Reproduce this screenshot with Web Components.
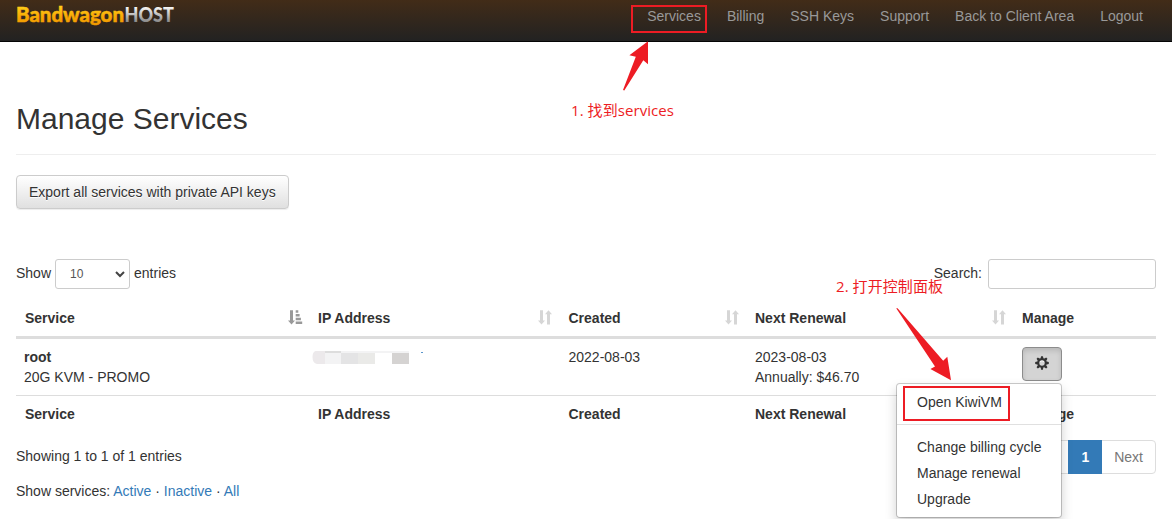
<!DOCTYPE html>
<html lang="en">
<head>
<meta charset="utf-8">
<title>Manage Services</title>
<style>
html,body{margin:0;height:519px;overflow:hidden;background:#fff}
body{font:14px/20px "Liberation Sans",Arial,sans-serif;color:#333}
</style>
</head>
<body>
<services-page></services-page>
<script>
const define = (name, html) => {
  const t = document.createElement('template');
  t.innerHTML = html;
  customElements.define(name, class extends HTMLElement {
    constructor() {
      super();
      this.attachShadow({mode: 'open'}).append(t.content.cloneNode(true));
    }
  });
};

define('brand-logo', `
<style>:host{display:block;width:160px;height:24px}svg{display:block;overflow:visible}text{font:900 20px Lato,sans-serif;stroke-width:.5}</style>
<svg width="160" height="24" viewBox="0 0 160 24">
<defs>
<linearGradient id="gold" gradientUnits="userSpaceOnUse" x1="0" y1="2" x2="0" y2="20"><stop offset="0" stop-color="#ffcf18"/><stop offset=".6" stop-color="#f8a905"/><stop offset="1" stop-color="#f09a00"/></linearGradient>
<linearGradient id="steel" gradientUnits="userSpaceOnUse" x1="0" y1="2" x2="0" y2="18"><stop offset="0" stop-color="#fff"/><stop offset="1" stop-color="#888"/></linearGradient>
</defs>
<text x="0" y="18" fill="url(#gold)" stroke="url(#gold)" textLength="108" lengthAdjust="spacingAndGlyphs">Bandwagon</text>
<text x="108.5" y="18" fill="url(#steel)" textLength="49.5" lengthAdjust="spacingAndGlyphs" style="font-size:20.5px">HOST</text>
</svg>`);

define('nav-link', `<style>:host{display:block;padding:6px 13px;color:#999;line-height:20px;white-space:nowrap}</style><slot></slot>`);

define('nav-bar', `
<style>:host{display:flex;box-sizing:border-box;height:42px;padding:0 16px;justify-content:space-between;border-bottom:1px solid #050505;background:linear-gradient(#422c18,#222)}
brand-logo{margin-top:4px}nav{display:flex}</style>
<brand-logo></brand-logo><nav><slot></slot></nav>`);

define('ui-button', `
<style>:host{display:inline-block}button{display:block;font:inherit;height:34px;padding:0 12px;border:1px solid #ccc;border-radius:4px;color:#333;background:linear-gradient(#fff,#e0e0e0);text-shadow:0 1px 0 #fff;box-shadow:inset 0 1px 0 rgba(255,255,255,.15),0 1px 1px rgba(0,0,0,.075)}
:host([pressed]) button{border-color:#8c8c8c;background:#d4d4d4;box-shadow:inset 0 3px 5px rgba(0,0,0,.125)}</style>
<button><slot></slot></button>`);

define('gear-icon', `
<style>:host{display:block;width:14px;height:16px}svg{display:block}</style>
<svg width="14" height="14" viewBox="0 0 14 14"><circle cx="7" cy="8" r="3.8" fill="none" stroke="#fff" stroke-width="2.2"/><g fill="#333"><g id="t"><path d="M6.1 .2h1.8l.8 3h-3.4zM6.1 13.8h1.8l.8-3h-3.4z"/></g><use href="#t" transform="rotate(45 7 7)"/><use href="#t" transform="rotate(90 7 7)"/><use href="#t" transform="rotate(135 7 7)"/></g><circle cx="7" cy="7" r="3.7" fill="none" stroke="#333" stroke-width="2.1"/></svg>`);

define('sort-icon', `
<style>:host{display:block;width:15px;height:15px}svg{display:none}:host(:not([sorted])) .both,:host([sorted]) .asc{display:block}</style>
<svg class="both" width="15" height="15" viewBox="0 0 15 15" fill="#d6d6d6"><path d="M2 .3h3v10.2h2L3.5 14.5 0 10.5h2zM9 14.5h3V4.3h2L10.5.3 7 4.3h2z"/></svg>
<svg class="asc" width="15" height="15" viewBox="0 0 15 15" fill="#999"><path d="M2 .3h3v10.2h2L3.5 14.5 0 10.5h2zM7.7 .3h2.6v2.4H7.7zM7.7 4h3.9v2.4H7.7zM7.7 7.8h5.2v2.4H7.7zM7.7 11.6h6.5v2.4H7.7z"/></svg>`);

define('length-select', `
<style>:host{display:inline-flex;box-sizing:border-box;width:75px;height:30px;border:1px solid #ccc;border-radius:3px;align-items:center;justify-content:space-between;padding:0 4px 0 14px;font-size:12px;color:#555;margin:0 4px}</style>
<span><slot></slot></span><svg width="10" height="7" viewBox="0 0 10 7"><path d="M1 1l4 4 4-4" fill="none" stroke="#444" stroke-width="2"/></svg>`);

define('masked-value', `
<style>:host{display:block;height:20px}svg{display:block}</style>
<svg width="120" height="20" viewBox="0 0 120 20">
<path d="M3.5 4H13v13H5Q.5 16 .5 10Q.5 5 3.5 4" fill="#ece9eb"/>
<path fill="#f3f3f4" d="M13 4h16v13H13zM29 4h68v2H29z"/><path fill="#ddd" d="M13 4h16v2H13z"/>
<path fill="#e4e4e5" d="M29 6h17v11H29z"/>
<path fill="#eaeae8" d="M46 6h17v11H46z"/>
<path fill="#d5d3d2" d="M80 6h17v11H80z"/><path fill="#5a96cc" d="M109 5h2v1h-2z"/></svg>`);

define('services-table', `
<style>:host{display:block;margin-top:11px}
table{width:1140px;table-layout:fixed;border-collapse:separate;border-spacing:0}
th,td{padding:8px;text-align:left;vertical-align:top;box-sizing:border-box}
thead th{border-bottom:3px solid #ddd}th:first-child{padding-left:9px}
tbody td{height:56px}tfoot th{border-top:1px solid #ddd;height:37px}
.h{display:flex;justify-content:space-between;align-items:center}
sort-icon{position:relative;top:-.5px;margin-right:-.5px}
masked-value{margin-left:-6px}ui-button{display:block;width:40px}</style>
<table><colgroup><col style="width:294px"><col style="width:250.5px"><col style="width:186.5px"><col style="width:267px"><col></colgroup>
<thead><tr>
<th><div class="h">Service<sort-icon sorted></sort-icon></div></th>
<th><div class="h">IP Address<sort-icon></sort-icon></div></th>
<th><div class="h">Created<sort-icon></sort-icon></div></th>
<th><div class="h">Next Renewal<sort-icon></sort-icon></div></th>
<th>Manage</th></tr></thead>
<tbody><tr><td><b>root</b><br>20G KVM - PROMO</td><td><masked-value></masked-value></td><td>2022-08-03</td><td>2023-08-03<br>Annually: $46.70</td><td><ui-button pressed><gear-icon></gear-icon></ui-button></td></tr></tbody>
<tfoot><tr><th>Service</th><th>IP Address</th><th>Created</th><th>Next Renewal</th><th>Manage</th></tr></tfoot></table>`);

define('page-links', `
<style>:host{display:flex}span{box-sizing:border-box;height:34px;padding:6px 12px;border:1px solid #ddd;margin-left:-1px;color:#777}
span:first-child{width:82px;border-radius:4px 0 0 4px}span:last-child{border-radius:0 4px 4px 0}.on{background:#337ab7;border-color:#337ab7;color:#fff;font-weight:700;position:relative}</style>
<span></span><span class="on">1</span><span>Next</span>`);

define('action-menu', `
<style>:host{display:block;position:absolute;left:896px;top:383px;box-sizing:border-box;width:166px;height:135px;padding:5px 0;border:1px solid rgba(0,0,0,.2);border-radius:4px;background:#fff;background-clip:padding-box;box-shadow:0 6px 12px rgba(0,0,0,.175)}
div{padding:3px 20px;white-space:nowrap}hr{border:0;height:1px;background:#e0e0e0;margin:9px 0}</style>
<div>Open KiwiVM</div><hr><div>Change billing cycle</div><div>Manage renewal</div><div>Upgrade</div>`);

define('tutorial-marks', `
<style>:host{display:block;position:absolute;left:0;top:0;pointer-events:none}svg{display:block}text{font:15px "Open Sans","Noto Sans CJK SC",sans-serif}</style>
<svg width="1172" height="519" viewBox="0 0 1172 519" fill="#ed1c24">
<g fill="none" stroke="#ed1c24" stroke-width="2"><path d="M632 6h74v26h-74zM904 387h105v33H904z"/></g>
<path d="M648 41.3V64.3L643.3 60.3 624.3 90.5 623 90 635.8 56.8 629.4 55.2z"/>
<path d="M896.2 308.3L897.6 308.3 943.2 360.7 947.3 356.8 951 380.2 930.4 369 935 366.6z"/>
<text x="571" y="116" textLength="103">1. 找到services</text>
<text x="836" y="292" textLength="107">2. 打开控制面板</text>
</svg>`);

define('services-page', `
<style>:host{display:block;position:relative;width:1172px;height:519px;overflow:hidden}
main{padding:0 16px}h1{font-size:30px;line-height:33px;font-weight:400;margin:0;padding:60px 0 19px;border-bottom:1px solid #eee}
.export{margin-top:20px}
.row{display:flex;justify-content:space-between;align-items:center}
.tools{margin-top:50px;height:30px}.tools>div{display:flex;align-items:center}.tools span{padding-bottom:2px}
input{box-sizing:border-box;width:168px;height:30px;border:1px solid #ccc;border-radius:3px;margin:0 0 0 6px;padding:5px 10px}
.foot{height:34px;margin-top:8px}.foot span{margin-top:-2px}p{margin:7px 0 0}a{color:#337ab7}</style>
<nav-bar><nav-link>Services</nav-link><nav-link>Billing</nav-link><nav-link>SSH Keys</nav-link><nav-link>Support</nav-link><nav-link>Back to Client Area</nav-link><nav-link>Logout</nav-link></nav-bar>
<main>
<h1>Manage Services</h1>
<div class="export row"><ui-button>Export all services with private API keys</ui-button></div>
<div class="tools row"><div><span>Show</span><length-select>10</length-select><span>entries</span></div><div><span>Search:</span><input></div></div>
<services-table></services-table>
<div class="foot row"><span>Showing 1 to 1 of 1 entries</span><page-links></page-links></div>
<p>Show services: <a>Active</a> · <a>Inactive</a> · <a>All</a></p>
</main>
<action-menu></action-menu>
<tutorial-marks></tutorial-marks>`);
</script>
</body>
</html>
